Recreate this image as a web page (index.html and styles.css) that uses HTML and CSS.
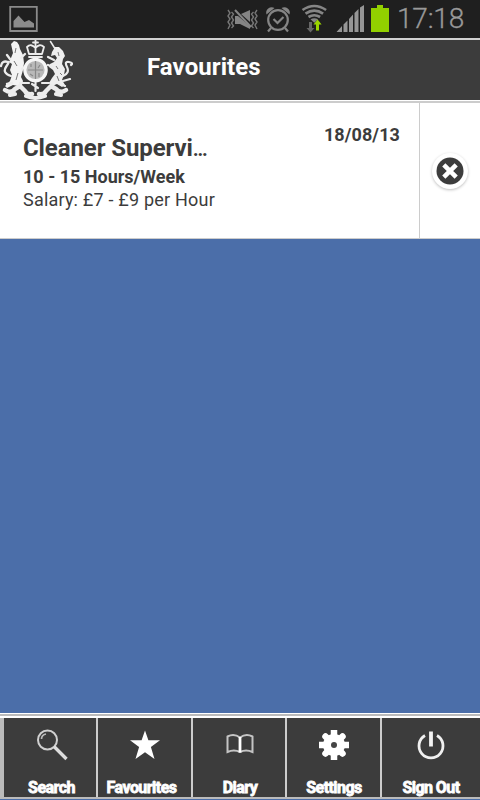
FILE: index.html
```html
<!DOCTYPE html>
<html lang="en">
<head>
<meta charset="utf-8">
<title>Favourites</title>
<link rel="stylesheet" href="styles.css">
</head>
<body>
<div class="screen">
  <div class="status">
    <svg class="status-icons" width="390" height="38" viewBox="0 0 390 38">
      <path d="M10.2 6.9H36.8V31H10.2Z" fill="none" stroke="#8b8b8b" stroke-width="1.8"/>
      <path d="M13.500 27.500V21l5-5.500 6 6.500 4.500-2 5 3.500V27.500Z" fill="#8b8b8b"/>
      <g fill="none" stroke="#777" stroke-width="1.400">
        <path d="M228 10l2 3-2 3 2 3-2 3 2 3-2 4M231.500 12l2 2-2 3 2 3-2 3 2 3-2 2M257 10l-2 3 2 3-2 3 2 3-2 3 2 4M253.500 12l-2 2 2 3-2 3 2 3-2 3 2 2"/>
      </g>
      <path d="M235 16h3l12 10v3L240 24h-5ZM241 14l9-4v12Z" fill="#858585"/>
      <path d="M235 10l16 17" stroke="#858585" stroke-width="2"/>
      <g fill="none" stroke="#858585" stroke-width="2.200">
        <circle cx="278" cy="20" r="9.800"/>
        <path d="M273.500 19l4 4 6-6M271 28l-3 3.500M285 28l3 3.500"/>
      </g>
      <path d="M266.500 14.500a5.500 5.500 0 0 1 8-6.500ZM289.500 14.500a5.500 5.500 0 0 0-8-6.500Z" fill="#858585"/>
      <g fill="none" stroke="#858585" stroke-width="2.700">
        <path d="M302.500 10q11.800-8 23.600 0M305.500 13.700q8.800-6 17.600 0M308.500 17q5.800-3.500 11.600 0"/>
      </g>
      <path d="M310.500 19.200q3.800-2 7.600 0l-3.800 3.500Z" fill="#858585"/>
      <path d="M309 22h3v6h2.500L310.500 32.500 306.500 28H309Z" fill="#666"/>
      <path d="M317.600 19.500l4 5H319v6h-3v-6h-2.500Z" fill="#9ad400"/>
      <path d="M336.500 32l5.500-6v6ZM343.500 24.500l4-4V32h-4ZM349 19l4-4.500V32h-4ZM354.500 13l4-4V32h-4ZM360 7.500l4-2.500V32h-4Z" fill="#969696"/>
      <path d="M371 8h6V5h6v3h6v24h-18Z" fill="#92d000"/>
    </svg>
    <span class="clock">17:18</span>
  </div>
  <header class="header">
    <svg class="crest" width="73" height="60" viewBox="0 0 73 60">
      <path d="M11 4l3-3 3 1 2 3 1 4 3 6 1 8-1 7-2 7 2 4-1 4-4 1-5-1-6 3-2-2 5-5 2-6-2-5 2-6-3-2 2-4 2-5Z" fill="#f3f3f3"/>
      <path d="M52 12l3-5 4 0 4 4 2 5-2 3-1 5 3 5-1 6-2 5 3 5-3 2-5-3-5 2-3-3 3-5 3-4-2-4-4-3 1-3 4-2 3-4-2-3-4 1Z" fill="#efefef"/>
      <path d="M16 8l-1 5M14 21l3 5M18 33l-2 7M58 12l1 4M56 26l2 3M57 36l2 5M60 33l2 2" fill="none" stroke="#777" stroke-width="1"/>
      <g fill="none" stroke="#ececec" stroke-linecap="round" stroke-linejoin="round">
        <path d="M11 36Q2 33 6 27t2-5q-6-2-7 4M10 19l-3-4M21 18l4-4M22 29l4-3M12 43l-5 1" stroke-width="2.300"/>
        <path d="M50.500 1.500l5 8" stroke-width="1.500"/>
        <path d="M54 20l-6-3M53 27l-5-2M63 36Q70 33 67 27t2-5 2 3M63 41l7-2M65 46l-5-2" stroke-width="2.200"/>
        <path d="M27 7q4-4 8.500 1 4-5 8.500-1l-2 7H29ZM29 17h13M35.500 0v14M33 2.500h5" stroke-width="1.800"/>
        <path d="M5 50q6 4 10-1l5-3 5 5q2 4 7 3M66 50q-6 4-10-1l-5-3-5 5q-2 4-7 3" stroke-width="4.500"/>
        <path d="M26 56q9 4 19 0M10 55l5-1M61 55l-5-1" stroke-width="4"/>
        <path d="M35.500 42v9M32 44l6 4M20 43l9 0M42 43l7 0" stroke-width="2.200"/>
      </g>
      <circle cx="35.500" cy="30" r="10.700" fill="#b9b9b9" stroke="#f6f6f6" stroke-width="3.200"/>
      <path d="M35.500 21v18M28 30h15M31 24v3M40 25l-2 3M30 34l3 2M39 33v4" stroke="#888" stroke-width="1.200"/>
    </svg>
    <h1 class="title">Favourites</h1>
  </header>
  <main class="content">
    <article class="job">
      <div class="job-info">
        <div class="job-date">18/08/13</div>
        <h2 class="job-title">Cleaner Supervi<span class="more">…</span></h2>
        <div class="job-hours">10 - 15 Hours/Week</div>
        <div class="job-salary">Salary: £7 - £9 per Hour</div>
      </div>
      <div class="job-action">
        <button class="remove" aria-label="Remove">
          <svg width="36" height="36" viewBox="0 0 36 36"><circle cx="18" cy="18" r="13.500" fill="#3c3c3c"/><path d="M11.800 11.800l12.400 12.400M24.200 11.800l-12.400 12.400" stroke="#fff" stroke-width="4.500"/></svg>
        </button>
      </div>
    </article>
  </main>
  <nav class="tabs">
    <a class="tab search"><svg width="32" height="32" viewBox="0 0 32 32"><circle cx="11.500" cy="11" r="9.500" fill="none" stroke="#d0d0d0" stroke-width="2"/><path d="M5.500 10q0-4 4.500-5" fill="none" stroke="#bbb" stroke-width="1.700"/><path d="M18 17.500L30.500 30" stroke="#ddd" stroke-width="3.300"/></svg><span class="label">Search</span></a>
    <a class="tab favourites"><svg width="32" height="32" viewBox="0 0 32 32"><path d="M16 1.500l3.400 9.700H31l-9.100 6.800 3.600 12L16 23.200 6.500 30l3.600-12L1 11.200h11.600Z" fill="#fff"/></svg><span class="label">Favourites</span></a>
    <a class="tab"><svg width="32" height="32" viewBox="0 0 32 32"><path d="M16 8.500Q10 4 3.500 7.500V23q6.500-3 12.500 0 6-3 12.500 0V7.500Q22 4 16 8.500Z" fill="none" stroke="#c4c4c4" stroke-width="2"/><path d="M16 8v15.500" stroke="#fff" stroke-width="2.800"/></svg><span class="label">Diary</span></a>
    <a class="tab settings"><svg width="32" height="32" viewBox="0 0 32 32"><g stroke="#fff" stroke-width="6.500"><path d="M16 1v30M1 16h30"/><path d="M7.500 7.500l17 17M24.500 7.500l-17 17" stroke-linecap="round"/></g><circle cx="16" cy="16" r="11" fill="#fff"/><circle cx="16" cy="16" r="3" fill="#444"/></svg><span class="label">Settings</span></a>
    <a class="tab"><svg width="32" height="32" viewBox="0 0 32 32"><path d="M10 6.500a12 12 0 1 0 12 0" fill="none" stroke="#f0f0f0" stroke-width="2.800"/><path d="M16 2.500v15" stroke="#f4f4f4" stroke-width="3.800"/></svg><span class="label">Sign Out</span></a>
  </nav>
</div>
</body>
</html>
```
FILE: styles.css
```css
* { box-sizing: border-box; }
body { margin: 0; font-family: Roboto, "Liberation Sans", sans-serif; color: #3c3c3c; }
.screen { width: 480px; height: 800px; display: flex; flex-direction: column; background: #4b6ea9; overflow: hidden; }
.status { height: 38px; display: flex; background: #1f1f1f; flex: none; }
.status-icons { display: block; flex: none; }
.clock { margin-left: 7px; font-size: 28px; line-height: 38px; font-weight: 300; letter-spacing: -.2px; color: #999; -webkit-text-stroke: .3px #999; white-space: nowrap; }
.header { height: 65px; flex: none; display: flex; background: #3c3c3c; border-top: 2px solid #d0d0d0; border-bottom: 2px solid #ccc; box-shadow: inset 0 -1px #fff; }
.crest { display: block; flex: none; }
.title { margin: 0 0 0 74px; font-size: 24px; line-height: 54px; font-weight: 700; letter-spacing: .08px; color: #fff; }
.content { flex: 1; }
.job { height: 136px; display: flex; background: #fff; border-bottom: 1px solid #ccc; }
.job-info { width: 420px; padding: 20px 19px 0 23px; border-right: 1px solid #ccc; }
.job-date { height: 10px; text-align: right; font-size: 18px; line-height: 24px; font-weight: 700; letter-spacing: .1px; }
.job-title { margin: 0; width: 250px; font-size: 24px; line-height: 30px; font-weight: 700; letter-spacing: -.1px; white-space: nowrap; }
.more { font-size: 20px; line-height: 1; }
.job-hours { font-size: 18px; line-height: 27px; font-weight: 700; }
.job-salary { font-size: 18px; line-height: 20px; letter-spacing: .2px; }
.job-action { flex: 1; display: flex; align-items: center; justify-content: center; }
.remove { width: 36px; height: 36px; padding: 0; border: 0; border-radius: 50%; background: #fff; box-shadow: 0 1px 3px rgba(0, 0, 0, .25); }
.remove svg { display: block; }
.tabs { height: 87px; flex: none; display: grid; grid-template-columns: 94px 95px 94px 95px 98px; padding: 5px 0 2px 4px; border-bottom: 1px solid #4b6ea9; background: linear-gradient(#fff 0 1px, #bbb 1px 3px, #fff 3px 5px, #bbb 5px); }
.tab { display: flex; flex-direction: column; align-items: center; height: 79px; padding: 11px 0 0 2px; background: #3c3c3c; border-right: 2px solid #ccc; }
.tab:last-child { border-right: 0; padding-left: 0; }
.search { padding-left: 3px; }
.settings { padding-left: 1px; }
.favourites { padding-left: 1px; }
.favourites .label { margin-right: 7px; }
.tab svg { display: block; flex: none; }
.label { margin-top: 16px; font-size: 16px; line-height: 22px; font-weight: 700; letter-spacing: -.55px; color: #fff; -webkit-text-stroke: .8px #fff; white-space: nowrap; }
```
